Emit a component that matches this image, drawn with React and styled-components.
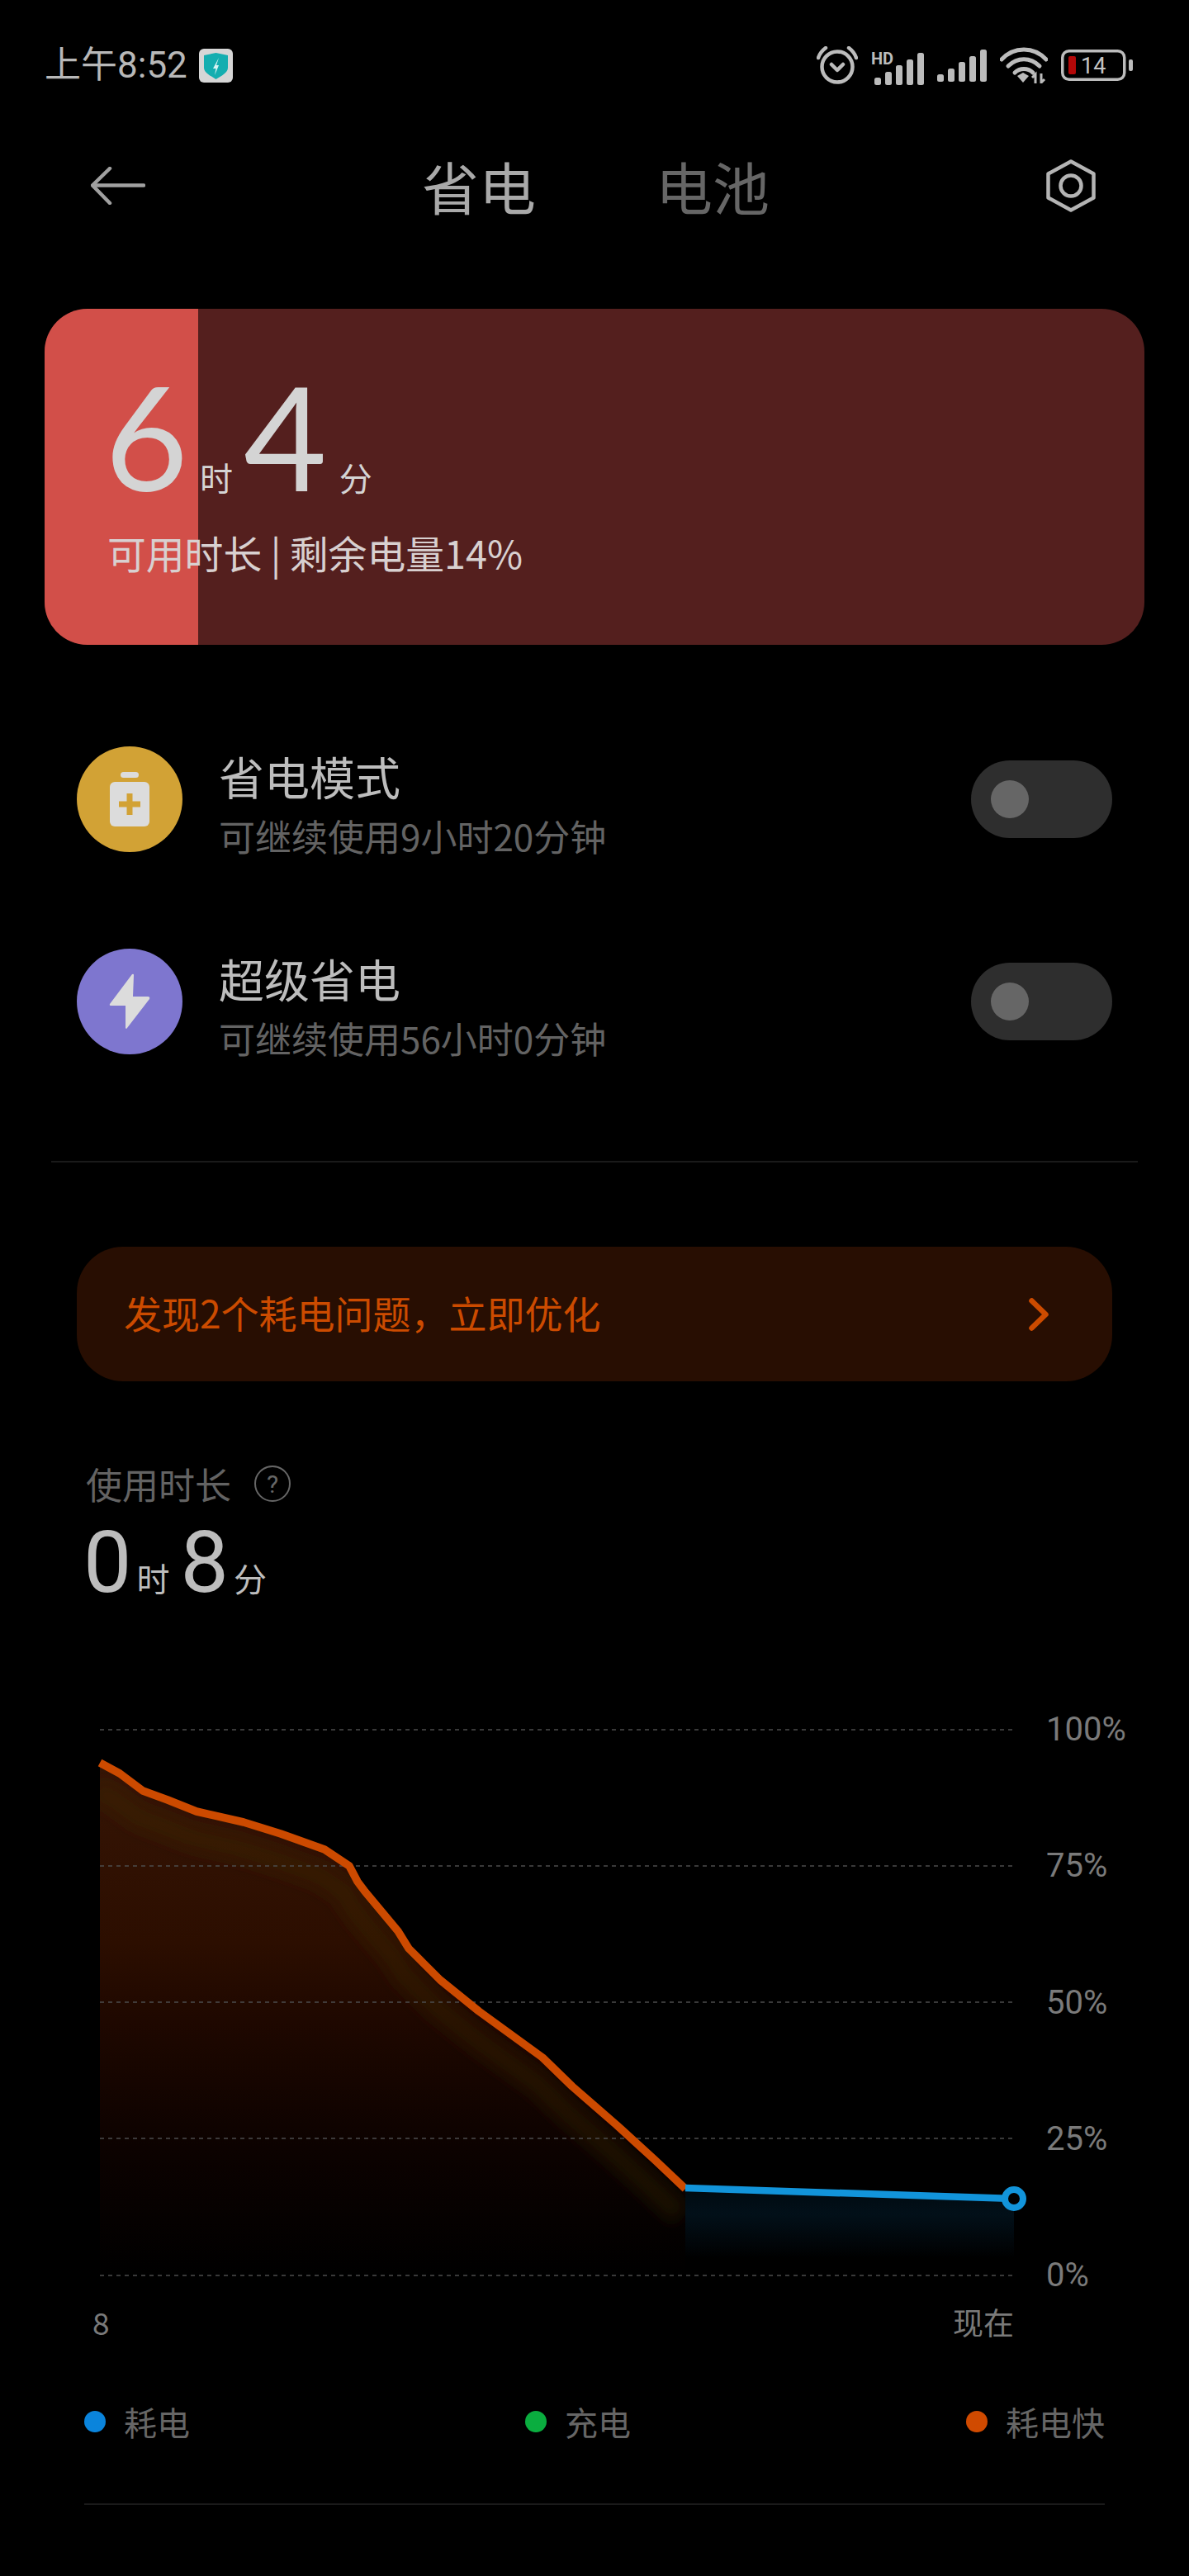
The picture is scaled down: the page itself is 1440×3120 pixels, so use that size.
import React from "react";
import styled, { createGlobalStyle } from "styled-components";

const CJK = `"Noto Sans CJK SC", "Noto Sans", sans-serif`;

const GlobalStyle = createGlobalStyle`
  html, body { margin: 0; padding: 0; background: #000; }
  body { font-family: ${CJK}; }
`;

const battery = 14;

// line points read off the reference, in page px (chart box starts at x=121, y=2094)
const fast = [
  [121, 2134], [145, 2147], [173, 2168], [203, 2179], [238, 2193], [295, 2206], [340, 2220],
  [393, 2239], [423, 2259], [433, 2278], [442, 2290], [467, 2320], [482, 2338], [495, 2359],
  [513, 2377], [533, 2397], [580, 2435], [657, 2491], [693, 2526], [747, 2573],
  [793, 2615], [830, 2650],
].map(([x, y]) => [x - 121, y - 2094]);
const slow = [[830, 2649], [1228, 2662]].map(([x, y]) => [x - 121, y - 2094]);
const pts = (list) => list.map((p) => p.join(",")).join(" ");
const BASE = 661;

const Page = styled.div`
  width: 1440px;
  height: 3120px;
  background: #000;
  overflow: hidden;
`;

const StatusBar = styled.div`
  height: 58px;
  padding: 50px 68px 0 54px;
  display: flex;
  justify-content: space-between;
  align-items: center;
`;
const StatusLeft = styled.div`
  display: flex;
  align-items: center;
  gap: 14px;
`;
const Clock = styled.span`
  font-family: Roboto, ${CJK};
  font-size: 44px;
  line-height: 46px;
  color: #b8b8b8;
`;
const StatusRight = styled.div`
  display: flex;
  align-items: center;
  gap: 16px;
`;

const NavBar = styled.div`
  margin-top: 72px;
  height: 90px;
  padding: 0 113px 0 110px;
  display: flex;
  align-items: center;
`;
const Tabs = styled.div`
  flex: 1;
  display: flex;
  justify-content: center;
  gap: 145px;
`;
const Tab = styled.span`
  font-size: 69px;
  line-height: 90px;
  color: ${(p) => (p.$on ? "#a9a9a9" : "#666")};
`;

const Card = styled.div`
  margin: 104px 54px 0;
  height: 407px;
  border-radius: 52px;
  background: #541f1e;
  overflow: hidden;
  position: relative;
`;
const CardFill = styled.div`
  position: absolute;
  left: 0;
  top: 0;
  bottom: 0;
  background: #d24f49;
`;
const CardBody = styled.div`
  position: relative;
  padding: 75px 0 0 76px;
  color: #d4d4d4;
`;
const TimeRow = styled.div`
  display: flex;
  align-items: baseline;
  height: 157px;
  margin-left: -3px;
`;
const BigNum = styled.span`
  font-family: Lato, Roboto, sans-serif;
  font-weight: 400;
  font-size: 174px;
  line-height: 157px;
  margin-right: ${(p) => p.$gap || 0}px;
`;
const BigUnit = styled.span`
  font-size: 40px;
  line-height: 40px;
  margin-right: ${(p) => p.$gap || 0}px;
`;
const CardNote = styled.div`
  margin-top: 33px;
  font-size: 46.800px;
  line-height: 60px;
  color: #d8d0d0;
`;

const Modes = styled.div`
  margin-top: 123px;
  padding: 0 93px;
  display: flex;
  flex-direction: column;
  gap: 117px;
`;
const Mode = styled.div`
  height: 128px;
  display: flex;
  align-items: center;
`;
const ModeIcon = styled.div`
  width: 128px;
  height: 128px;
  border-radius: 50%;
  background: ${(p) => p.$bg};
  display: flex;
  align-items: center;
  justify-content: center;
  flex-shrink: 0;
`;
const ModeText = styled.div`
  margin: 8px 0 0 44px;
  flex: 1;
`;
const ModeTitle = styled.div`
  font-size: 55px;
  line-height: 70px;
  color: #bdbdbd;
`;
const ModeSub = styled.div`
  margin-top: 9px;
  font-size: 44px;
  line-height: 58px;
  color: #636363;
`;
const Toggle = styled.div`
  width: 171px;
  height: 94px;
  border-radius: 47px;
  background: #2e2e2e;
  display: flex;
  align-items: center;
  padding-left: 24px;
  box-sizing: border-box;
`;
const Knob = styled.div`
  width: 46px;
  height: 46px;
  border-radius: 50%;
  background: #666;
`;

const Divider = styled.div`
  margin: ${(p) => p.$top}px ${(p) => p.$side}px 0;
  height: 2px;
  background: #1a1a1a;
`;

const Banner = styled.div`
  margin: 102px 93px 0;
  height: 163px;
  border-radius: 56px;
  background: #280e02;
  padding: 0 77px 0 57px;
  display: flex;
  align-items: center;
  justify-content: space-between;
  color: #cc4b00;
  font-size: 46px;
`;
const BannerText = styled.span`
  margin-bottom: 5px;
`;

const Usage = styled.div`
  margin-top: 96px;
  padding-left: 104px;
`;
const UsageHead = styled.div`
  display: flex;
  align-items: center;
  gap: 28px;
  font-size: 44px;
  line-height: 56px;
  color: #636363;
`;
const UsageTime = styled.div`
  margin: 23px 0 0 -3px;
  height: 90px;
  display: flex;
  align-items: baseline;
  color: #bdbdbd;
`;
const UsageNum = styled.span`
  font-family: Roboto, sans-serif;
  font-weight: 400;
  font-size: 104px;
  line-height: 90px;
  margin-right: 6px;
`;
const UsageUnit = styled.span`
  font-size: 40px;
  margin-right: 13px;
`;

const Chart = styled.div`
  margin-top: 157px;
  padding-left: 121px;
  display: flex;
`;
const Plot = styled.svg`
  width: 1107px;
  height: 661px;
  flex-shrink: 0;
  overflow: visible;
  display: block;
`;
const YAxis = styled.div`
  margin: -24px 0 0 39px;
  height: 709px;
  display: flex;
  flex-direction: column;
  justify-content: space-between;
  font-family: Roboto, ${CJK};
  font-size: 40px;
  line-height: 48px;
  color: #7a7a7a;
`;
const XAxis = styled.div`
  margin: 8px 0 0 112px;
  width: 1116px;
  display: flex;
  justify-content: space-between;
  font-size: 37px;
  line-height: 48px;
  color: #7a7a7a;
`;

const Legend = styled.div`
  margin-top: 72px;
  padding: 0 102px;
  display: flex;
  justify-content: space-between;
`;
const LegendItem = styled.div`
  display: flex;
  align-items: center;
  gap: 22px;
  font-size: 40px;
  line-height: 50px;
  color: #666;
`;
const Dot = styled.span`
  width: 26px;
  height: 26px;
  border-radius: 50%;
  background: ${(p) => p.$c};
`;

const Bars = ({ x }) => (
  <g fill="#bcbcbc">
    <rect x={x} y="30" width="8" height="9" rx="2.500" />
    <rect x={x + 13} y="23" width="8" height="16" rx="2.500" />
    <rect x={x + 26} y="15" width="8" height="24" rx="2.500" />
    <rect x={x + 39} y="8" width="8" height="31" rx="2.500" />
    <rect x={x + 52} y="0" width="8" height="39" rx="2.500" />
  </g>
);

const ShieldBadge = () => (
  <svg width="41" height="41" viewBox="0 0 41 41">
    <rect width="41" height="41" rx="6" fill="#d6d6d6" />
    <path d="M6 8 L20.500 5 L35 8 V23 C35 29 27 33 20.500 37 C14 33 6 29 6 23Z" fill="#14aeb0" />
    <path d="M24 11 L17 24 H20.500 L19 32 L24 20 H21Z" fill="#d8f3f3" />
  </svg>
);

const AlarmIcon = () => (
  <svg width="50" height="46" viewBox="0 0 50 46" fill="none" stroke="#bcbcbc" strokeWidth="4.500" strokeLinecap="round" strokeLinejoin="round">
    <circle cx="25" cy="25" r="18.500" />
    <path d="M18 22 L25 29 L32 22" />
    <path d="M2 14 C4 8 7 5 11 2" />
    <path d="M48 14 C46 8 43 5 39 2" />
  </svg>
);

const WifiIcon = () => (
  <svg width="58" height="44" viewBox="0 0 58 44" fill="none">
    <g stroke="#bcbcbc" strokeWidth="5" strokeLinecap="round">
      <path d="M2 15 C17 -1 41 -1 56 15" />
      <path d="M10 23 C21 12 37 12 48 23" />
      <path d="M18 31 C24 25 34 25 40 31" />
    </g>
    <path d="M21 35 L28 31 L35 35 L28 43Z" fill="#bcbcbc" />
    <path d="M43 44 V33 L39 37 M50 32 V43 L54 39" stroke="#bcbcbc" strokeWidth="3" />
  </svg>
);

const BatteryIcon = () => (
  <svg width="87" height="38" viewBox="0 0 87 38">
    <rect x="1.750" y="1.750" width="75" height="34.500" rx="8" fill="none" stroke="#bcbcbc" strokeWidth="3.500" />
    <rect x="9" y="8" width="9" height="22" rx="2" fill="#b30808" />
    <rect x="82" y="12" width="5" height="14" rx="2" fill="#bcbcbc" />
    <text x="24" y="29" fontSize="27" fontFamily="Roboto, sans-serif" fill="#c4c4c4">14</text>
  </svg>
);

const BackArrow = () => (
  <svg width="66" height="46" viewBox="0 0 66 46" fill="none" stroke="#a0a0a0" strokeWidth="4.500" strokeLinecap="round" strokeLinejoin="round">
    <path d="M64 22.500 H3" />
    <path d="M23 2 L2 22.500 L23 44" />
  </svg>
);

const GearIcon = () => (
  <svg width="60" height="64" viewBox="0 0 60 64" fill="none" stroke="#b4b4b4" strokeWidth="4.500">
    <path d="M30 2.500 L57.500 17.500 V46.500 L30 61.500 L2.500 46.500 V17.500Z" strokeLinejoin="round" />
    <circle cx="30" cy="32" r="12.500" />
  </svg>
);

const SaverGlyph = () => (
  <svg width="48" height="66" viewBox="0 0 48 66">
    <rect x="13" y="0" width="22" height="7" rx="3.500" fill="#dcdcdc" />
    <rect x="0" y="12" width="48" height="54" rx="6" fill="#dcdcdc" />
    <path d="M20.500 26 h7 v9.500 h9.500 v7 h-9.500 v9.500 h-7 v-9.500 h-9.500 v-7 h9.500Z" fill="#d2a235" />
  </svg>
);

const BoltGlyph = () => (
  <svg width="50" height="68" viewBox="0 0 50 68">
    <path d="M28 1 L1 37 Q0 39 3 39 H20 L20 66 Q21 68 22 66 L49 31 Q50 28 47 28 H29 L30 2 Q30 0 28 1Z" fill="#dcdcdc" />
  </svg>
);

const Chevron = () => (
  <svg width="24" height="40" viewBox="0 0 24 40" fill="none" stroke="#cc4b00" strokeWidth="6.500" strokeLinecap="round" strokeLinejoin="round">
    <path d="M3.500 3.500 L20.500 20 L3.500 36.500" />
  </svg>
);

const HelpIcon = () => (
  <svg width="44" height="44" viewBox="0 0 44 44">
    <circle cx="22" cy="22" r="21" fill="none" stroke="#666" strokeWidth="2" />
    <text x="22" y="33" textAnchor="middle" fontSize="30" fontFamily="Roboto, sans-serif" fill="#666">?</text>
  </svg>
);

const UsageChart = () => (
  <Plot viewBox="0 0 1107 661">
    <defs>
      <linearGradient id="hot" x1="0" y1="0" x2="0" y2="1">
        <stop offset="0" stopColor="#361505" />
        <stop offset="0.35" stopColor="#2c0e00" />
        <stop offset="0.5" stopColor="#1f0800" />
        <stop offset="0.75" stopColor="#0c0200" />
        <stop offset="1" stopColor="#000" />
      </linearGradient>
      <linearGradient id="cold" x1="0" y1="0" x2="0" y2="1">
        <stop offset="0" stopColor="#000a10" />
        <stop offset="0.3" stopColor="#021019" />
        <stop offset="0.65" stopColor="#010508" />
        <stop offset="0.8" stopColor="#000" />
        <stop offset="1" stopColor="#000" />
      </linearGradient>
      <filter id="soft" x="-10%" y="-10%" width="120%" height="120%">
        <feGaussianBlur stdDeviation="9" />
      </filter>
      <clipPath id="hotClip">
        <polygon points={`0,${BASE} ${pts(fast)} 709,${BASE}`} />
      </clipPath>
    </defs>
    <polygon points={`0,${BASE} ${pts(fast)} 709,${BASE}`} fill="url(#hot)" />
    <polygon points={`709,${BASE} ${pts(slow)} 1107,${BASE}`} fill="url(#cold)" />
    <g clipPath="url(#hotClip)">
      <polyline points={pts(fast)} transform="translate(-6 32)" fill="none" stroke="#3f3008" strokeOpacity="0.32" strokeWidth="30" filter="url(#soft)" />
    </g>
    {[0, 165, 330, 495, 661].map((y) => (
      <line key={y} x1="0" x2="1107" y1={y} y2={y} stroke="#4c4c4c" strokeWidth="1.500" strokeDasharray="5 5" />
    ))}
    <polyline points={pts(fast)} fill="none" stroke="#cc4a00" strokeWidth="9.500" strokeLinejoin="round" strokeLinecap="butt" />
    <polyline points={pts(slow)} fill="none" stroke="#1294da" strokeWidth="8.500" />
    <circle cx="1107" cy="568" r="11" fill="#000" stroke="#1294da" strokeWidth="8" />
  </Plot>
);

export default function App() {
  return (
    <Page>
      <GlobalStyle />
      <StatusBar>
        <StatusLeft>
          <Clock>上午8:52</Clock>
          <ShieldBadge />
        </StatusLeft>
        <StatusRight>
          <AlarmIcon />
          <svg width="64" height="48" viewBox="0 -8 64 48">
            <text x="0" y="15" fontSize="20" fontWeight="700" fontFamily="Roboto, sans-serif" fill="#bcbcbc">HD</text>
            <g transform="translate(4 1)"><Bars x={0} /></g>
          </svg>
          <svg width="60" height="40" viewBox="0 0 60 40">
            <g transform="translate(0 1)"><Bars x={0} /></g>
          </svg>
          <WifiIcon />
          <BatteryIcon />
        </StatusRight>
      </StatusBar>

      <NavBar>
        <BackArrow />
        <Tabs>
          <Tab $on>省电</Tab>
          <Tab>电池</Tab>
        </Tabs>
        <GearIcon />
      </NavBar>

      <Card>
        <CardFill style={{ width: `${battery}%` }} />
        <CardBody>
          <TimeRow>
            <BigNum $gap={14}>6</BigNum>
            <BigUnit $gap={13}>时</BigUnit>
            <BigNum $gap={15}>4</BigNum>
            <BigUnit>分</BigUnit>
          </TimeRow>
          <CardNote>可用时长 | 剩余电量{battery}%</CardNote>
        </CardBody>
      </Card>

      <Modes>
        <Mode>
          <ModeIcon $bg="#d2a235"><SaverGlyph /></ModeIcon>
          <ModeText>
            <ModeTitle>省电模式</ModeTitle>
            <ModeSub>可继续使用9小时20分钟</ModeSub>
          </ModeText>
          <Toggle><Knob /></Toggle>
        </Mode>
        <Mode>
          <ModeIcon $bg="#7e76cf"><BoltGlyph /></ModeIcon>
          <ModeText>
            <ModeTitle>超级省电</ModeTitle>
            <ModeSub>可继续使用56小时0分钟</ModeSub>
          </ModeText>
          <Toggle><Knob /></Toggle>
        </Mode>
      </Modes>

      <Divider $top={129} $side={62} />

      <Banner>
        <BannerText>发现2个耗电问题，立即优化</BannerText>
        <Chevron />
      </Banner>

      <Usage>
        <UsageHead>
          <span>使用时长</span>
          <HelpIcon />
        </UsageHead>
        <UsageTime>
          <UsageNum>0</UsageNum>
          <UsageUnit>时</UsageUnit>
          <UsageNum>8</UsageNum>
          <UsageUnit>分</UsageUnit>
        </UsageTime>
      </Usage>

      <Chart>
        <UsageChart />
        <YAxis>
          <span>100%</span>
          <span>75%</span>
          <span>50%</span>
          <span>25%</span>
          <span>0%</span>
        </YAxis>
      </Chart>
      <XAxis>
        <span>8</span>
        <span>现在</span>
      </XAxis>

      <Legend>
        <LegendItem><Dot $c="#0a84dc" />耗电</LegendItem>
        <LegendItem><Dot $c="#0aad3f" />充电</LegendItem>
        <LegendItem><Dot $c="#d04a00" />耗电快</LegendItem>
      </Legend>

      <Divider $top={74} $side={102} />
    </Page>
  );
}
